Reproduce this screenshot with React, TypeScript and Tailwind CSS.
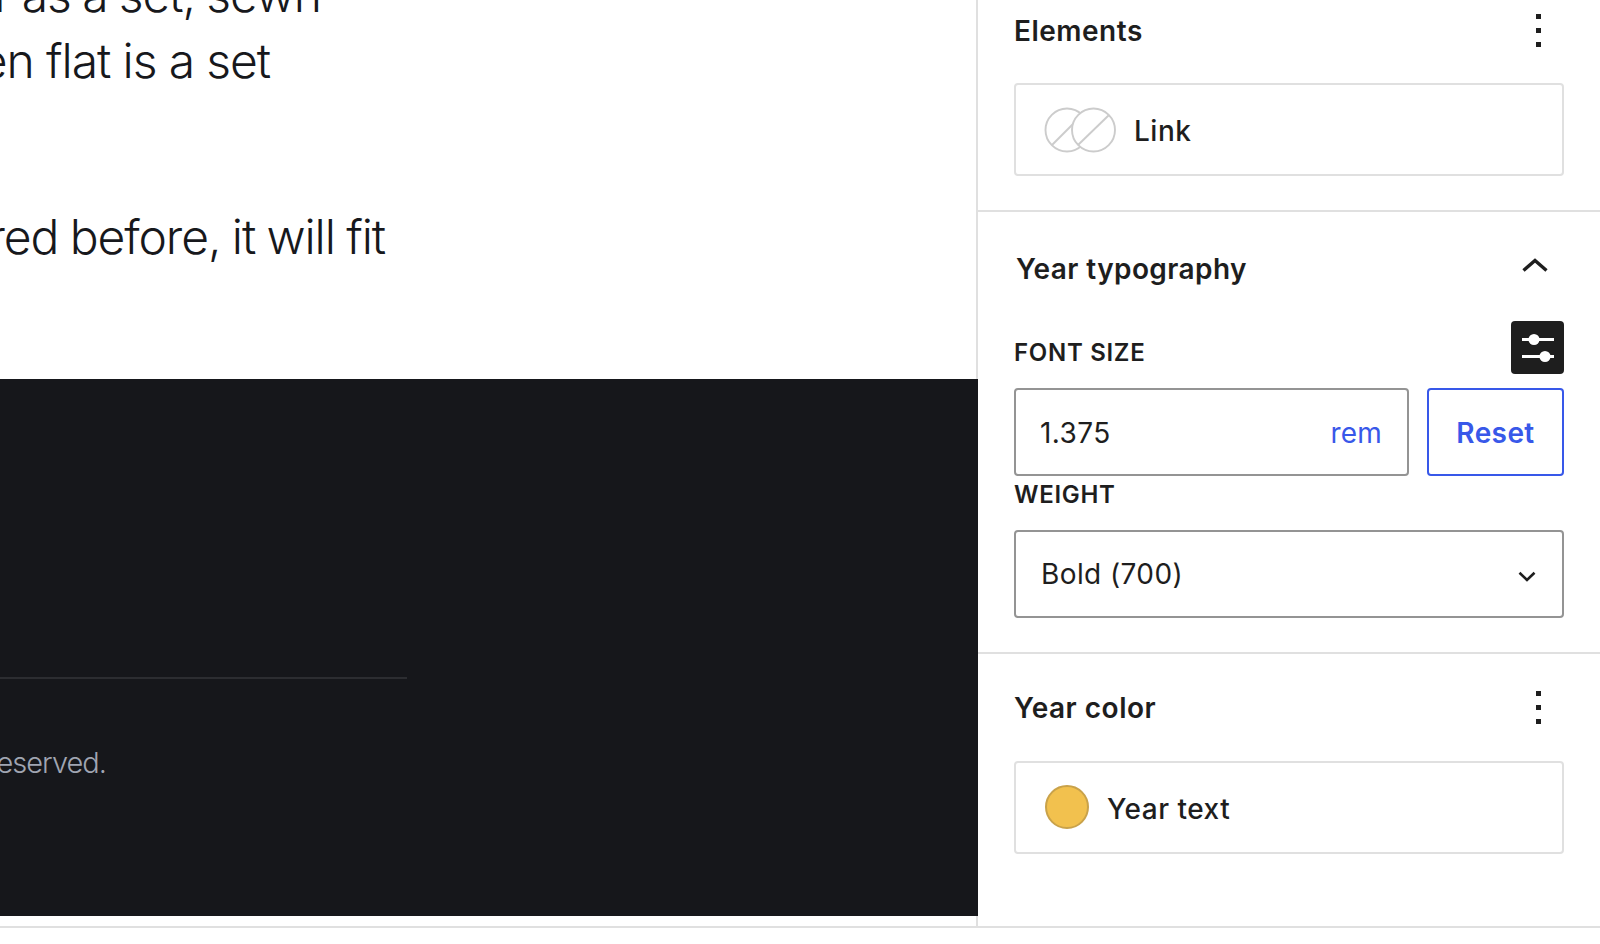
import React from 'react';

const inter = '[font-family:Inter,sans-serif]';

const Kebab: React.FC = () => (
  <div className="flex flex-col gap-[9px] mr-[23px] mb-[2px]">
    <span className="block w-[5px] h-[5px] bg-[#1e1e1e]" />
    <span className="block w-[5px] h-[5px] bg-[#1e1e1e]" />
    <span className="block w-[5px] h-[5px] bg-[#1e1e1e]" />
  </div>
);

const ElementsIcon: React.FC = () => (
  <svg width="72" height="46" viewBox="0 0 72 46" fill="none" stroke="#cccccc" strokeWidth="1.9" className="shrink-0">
    <circle cx="23" cy="23" r="21.5" />
    <line x1="8" y1="38" x2="29" y2="17" />
    <circle cx="49.5" cy="23" r="21.5" fill="#ffffff" />
    <line x1="34" y1="38" x2="65" y2="8" />
  </svg>
);

const SectionHead: React.FC<{ title: string }> = ({ title }) => (
  <div className="flex items-center justify-between h-[62px]">
    <h3 className="text-[28px] font-semibold tracking-[0.5px] text-[#1e1e1e]">{title}</h3>
    <Kebab />
  </div>
);

const App: React.FC = () => {
  return (
    <div className={`${inter} w-[1600px] h-[944px] bg-white overflow-hidden`}>
      <div className="flex h-[928px] border-b-2 border-[#e0e0e0]">
        {/* page preview */}
        <div className="w-[978px] shrink-0 flex flex-col">
          <div className="h-[379px] overflow-hidden border-r-2 border-[#e0e0e0] text-[#17181c] text-[48px] font-light leading-[66px] tracking-[-1.1px] whitespace-nowrap">
            <div className="-mt-[38px]">
              <div className="flex justify-end w-[321px] [word-spacing:-1px]">r as a set, sewn</div>
              <div className="flex justify-end w-[270px]">en flat is a set</div>
              <div className="flex justify-end w-[385px] mt-[110px] [word-spacing:-1px]">red before, it will fit</div>
            </div>
          </div>
          <div className="h-[537px] bg-[#16171b] overflow-hidden pt-[298px]">
            <div className="w-[407px] h-[2px] bg-[#2c2d31]" />
            <div className="flex justify-end w-[106px] mt-[64px] text-[29px] font-light leading-[40px] tracking-[-1px] text-[#a0a5b2] whitespace-nowrap">
              eserved.
            </div>
          </div>
          <div className="flex-1 border-r-2 border-[#e0e0e0]" />
        </div>

        {/* settings sidebar */}
        <aside className="flex-1 flex flex-col text-[#1e1e1e]">
          <section className="h-[212px] pl-[36px] pr-[36px] border-b-2 border-[#e0e0e0]">
            <SectionHead title="Elements" />
            <div className="mt-[21px] h-[93px] flex items-center gap-[18px] pl-[28px] border-2 border-[#e0e0e0] rounded-[4px]">
              <ElementsIcon />
              <span className="text-[28px] font-medium tracking-[0.5px] mt-[3px]">Link</span>
            </div>
          </section>

          <section className="pl-[36px] pr-[36px] border-b-2 border-[#e0e0e0]">
            <div className="flex items-center justify-between h-[109px] pl-[2px]">
              <h3 className="text-[28px] font-semibold tracking-[0.4px] mt-[4px]">Year typography</h3>
              <svg width="28" height="16" viewBox="0 0 28 16" fill="none" stroke="#1e1e1e" strokeWidth="3.4" className="mr-[15px] mb-[3px]">
                <path d="M2.5 13.5 14 3.5 25.5 13.5" />
              </svg>
            </div>
            <div className="flex items-center justify-between h-[53px]">
              <label className="text-[24px] font-semibold tracking-[0.7px] mt-[10px]">FONT SIZE</label>
              <button className="w-[53px] h-[53px] flex items-center justify-center rounded-[4px] bg-[#1e1e1e]">
                <svg width="32" height="28" viewBox="0 0 32 28" fill="#ffffff">
                  <rect x="0" y="4" width="32" height="3" />
                  <circle cx="12" cy="5.5" r="5.5" />
                  <rect x="0" y="21" width="32" height="3" />
                  <circle cx="23" cy="22.5" r="5.5" />
                </svg>
              </button>
            </div>
            <div className="mt-[14px] flex gap-[18px] h-[88px]">
              <div className="flex-1 flex items-center justify-between pl-[24px] pr-[25px] border-2 border-[#949494] rounded-[4px]">
                <span className="text-[28px] tracking-[0.4px] mt-[2px]">1.375</span>
                <span className="text-[28px] tracking-[0.2px] text-[#3858e9] mt-[2px]">rem</span>
              </div>
              <button className="w-[137px] border-2 border-[#3858e9] rounded-[4px] text-[28px] font-semibold tracking-[0.4px] text-[#3858e9] pt-[2px]">
                Reset
              </button>
            </div>
            <div className="h-[36px] flex items-center">
              <label className="text-[24px] font-semibold tracking-[0.7px] mt-[2px]">WEIGHT</label>
            </div>
            <div className="mt-[18px] mb-[34px] h-[88px] flex items-center justify-between pl-[25px] pr-[26px] border-2 border-[#949494] rounded-[4px]">
              <span className="text-[28px] tracking-[0.4px] mb-[1px]">Bold (700)</span>
              <svg width="18" height="11" viewBox="0 0 18 11" fill="none" stroke="#1e1e1e" strokeWidth="2.6" className="mt-[4px]">
                <path d="M1.5 1.8 9 9 16.5 1.8" />
              </svg>
            </div>
          </section>

          <section className="pt-[23px] pl-[36px] pr-[36px]">
            <SectionHead title="Year color" />
            <div className="mt-[22px] h-[93px] flex items-center gap-[18px] pl-[29px] border-2 border-[#e0e0e0] rounded-[4px]">
              <span className="w-[44px] h-[44px] rounded-full bg-[#f2c14e] border-2 border-[#c9a24a] mb-[1px]" />
              <span className="text-[28px] font-medium tracking-[0.5px] mt-[3px]">Year text</span>
            </div>
          </section>
        </aside>
      </div>
    </div>
  );
};

export default App;
